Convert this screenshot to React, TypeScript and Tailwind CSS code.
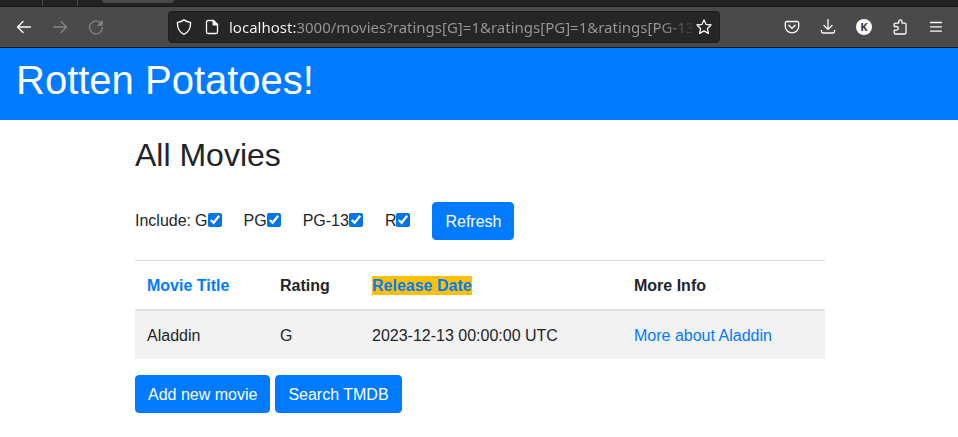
import type { ReactNode } from "react";

const ratings = ["G", "PG", "PG-13", "R"];

const movies = [{ title: "Aladdin", rating: "G", released: "2023-12-13 00:00:00 UTC" }];

function ToolIcon({ children, className = "" }: { children: ReactNode; className?: string }) {
  return (
    <svg
      viewBox="0 0 16 16"
      className={`size-4 ${className}`}
      fill="none"
      stroke="currentColor"
      strokeWidth="1.3"
      strokeLinecap="round"
      strokeLinejoin="round"
      aria-hidden="true"
    >
      {children}
    </svg>
  );
}

function Browser() {
  return (
    <div className="bg-[#4a4a4a] font-['Noto_Sans',sans-serif] text-[#fbfbfe]">
      <div className="flex h-[7px] items-start border-b border-[#181818] bg-[#222222]">
        <div className="h-full w-[43px] border-r border-[#4c4c4c]" />
        <div className="h-full w-[35px] border-r border-[#4c4c4c]" />
        <div className="ml-6 h-[3px] w-[72px] rounded-b-sm bg-[#4a4a4a]" />
      </div>
      <div className="flex h-[41px] items-center border-b border-[#181818] pr-[14px] pl-4">
        <div className="flex w-[152px] shrink-0 items-center gap-5">
          <button type="button" aria-label="Back">
            <ToolIcon>
              <path d="M14.5 8H1.5M7 2.5 1.5 8 7 13.5" />
            </ToolIcon>
          </button>
          <button type="button" aria-label="Forward" className="text-[#858585]">
            <ToolIcon>
              <path d="M1.5 8h13M9 2.5 14.5 8 9 13.5" />
            </ToolIcon>
          </button>
          <button type="button" aria-label="Reload" className="text-[#858585]">
            <ToolIcon>
              <path d="M14.3 8.5A6.4 6.4 0 1 1 12.2 3.6" />
              <path d="M14.4 1.6v4.9H9.5z" fill="currentColor" strokeWidth="0.6" />
            </ToolIcon>
          </button>
        </div>
        <div className="flex h-8 min-w-0 flex-1 items-center rounded-sm border border-[#1c1c1c] bg-[#262626] pr-[7px] pl-[7px]">
          <ToolIcon className="shrink-0">
            <path d="M8 .9C6.200 2.200 4 3 1.500 3.300 1.200 8.500 3.200 13 8 15.300c4.800-2.300 6.800-6.800 6.500-12C12 3 9.800 2.200 8 .9z" />
          </ToolIcon>
          <ToolIcon className="ml-3 shrink-0">
            <path d="M9.500 1.500H4A1.500 1.500 0 0 0 2.500 3v10A1.500 1.500 0 0 0 4 14.500h8a1.500 1.500 0 0 0 1.500-1.500V5.500z" />
            <path d="M9.200 1.500v4.300h4.300z" fill="currentColor" />
          </ToolIcon>
          <input
            type="text"
            aria-label="Address"
            defaultValue="localhost:3000/movies?ratings[G]=1&ratings[PG]=1&ratings[PG-13]=1&ratings[R]=1"
            className="ml-[9px] min-w-0 flex-1 bg-[linear-gradient(to_right,#fbfbfe_68px,#989898_68px,#989898_430px,transparent_470px)] bg-clip-text text-[15px] leading-6 text-transparent outline-none"
          />
          <button type="button" aria-label="Bookmark" className="ml-1 shrink-0">
            <ToolIcon>
              <path d="m8 .9 2.100 4.500 5 .6-3.700 3.400 1 5L8 11.900l-4.400 2.500 1-5L.9 6l5-.6z" />
            </ToolIcon>
          </button>
        </div>
        <div className="ml-16 flex shrink-0 items-center gap-5">
          <button type="button" aria-label="Save to Pocket">
            <ToolIcon>
              <path d="M2.800 2.500h10.400a1.500 1.500 0 0 1 1.500 1.500v3.500a6.700 6.300 0 0 1-13.400 0V4a1.500 1.500 0 0 1 1.500-1.500z" />
              <path d="M4.800 6.300 8 9.300l3.200-3" />
            </ToolIcon>
          </button>
          <button type="button" aria-label="Downloads">
            <ToolIcon>
              <path d="M8 .5v9.700M4 6.500l4 3.900 4-3.900M1.500 11.500v1A1.500 1.500 0 0 0 3 14h10a1.500 1.500 0 0 0 1.500-1.500v-1" />
            </ToolIcon>
          </button>
          <button
            type="button"
            aria-label="Account"
            className="flex size-4 items-center justify-center rounded-full bg-[#fbfbfe] text-[11px] leading-4 font-bold text-[#3a3a3a]"
          >
            K
          </button>
          <button type="button" aria-label="Extensions">
            <ToolIcon>
              <path d="M2.200 7.500V5.300A1.200 1.200 0 0 1 3.400 4.100H6.800V2.400a1.600 1.600 0 0 1 3.200 0v1.700h2.800A1.200 1.200 0 0 1 14 5.300v8.500A1.200 1.200 0 0 1 12.800 15H3.400a1.200 1.200 0 0 1-1.200-1.200V11.200h2.200a1.800 1.800 0 0 0 0-3.700z" />
            </ToolIcon>
          </button>
          <button type="button" aria-label="Menu">
            <ToolIcon>
              <path d="M2.500 3.500h11M2.500 7.800h11M2.500 12.100h11" />
            </ToolIcon>
          </button>
        </div>
      </div>
    </div>
  );
}

function PrimaryButton({ children }: { children: ReactNode }) {
  return (
    <button
      type="button"
      className="rounded-sm border border-[#007bff] bg-[#007bff] px-3 pt-[7px] pb-[5px] text-white"
    >
      {children}
    </button>
  );
}

export default function App() {
  return (
    <div className="min-h-screen bg-white font-['Liberation_Sans',Arial,sans-serif] text-base text-[#212529]">
      <Browser />
      <header className="bg-[#007bff] px-4 pt-2 pb-4 text-white">
        <h1 className="text-[40px] leading-[48px]">Rotten Potatoes!</h1>
      </header>
      <main className="pl-0.5">
        <div className="mx-auto max-w-[690px] pt-4">
          <h2 className="text-[32px] leading-[38px]">All Movies</h2>
          <form className="mt-7 flex items-center">
            <span className="mr-1">Include:</span>
            {ratings.map((rating) => (
              <label key={rating} className="mr-[22px] flex items-center">
                {rating}
                <input type="checkbox" defaultChecked className="mb-0.5 size-3.5 accent-[#0074e8]" />
              </label>
            ))}
            <PrimaryButton>Refresh</PrimaryButton>
          </form>
          <table className="mt-5 mb-4 w-full table-fixed border-collapse text-left">
            <thead>
              <tr className="border-t border-b-2 border-[#dee2e6]">
                <th className="w-[133px] px-3 pt-[13px] pb-[11px]">
                  <a href="#title" className="text-[#007bff]">Movie Title</a>
                </th>
                <th className="w-[92px] px-3 pt-[13px] pb-[11px]">Rating</th>
                <th className="w-[262px] px-3 pt-[13px] pb-[11px]">
                  <a href="#release-date" className="bg-[#ffc107] py-px text-[#007bff]">Release Date</a>
                </th>
                <th className="px-3 pt-[13px] pb-[11px]">More Info</th>
              </tr>
            </thead>
            <tbody>
              {movies.map((movie) => (
                <tr key={movie.title} className="bg-[#f2f2f2]">
                  <td className="px-3 pt-[13px] pb-[11px]">{movie.title}</td>
                  <td className="px-3 pt-[13px] pb-[11px]">{movie.rating}</td>
                  <td className="px-3 pt-[13px] pb-[11px]">{movie.released}</td>
                  <td className="px-3 pt-[13px] pb-[11px]">
                    <a href="#aladdin" className="text-[#007bff]">More about {movie.title}</a>
                  </td>
                </tr>
              ))}
            </tbody>
          </table>
          <div className="flex gap-[5px]">
            <PrimaryButton>Add new movie</PrimaryButton>
            <PrimaryButton>Search TMDB</PrimaryButton>
          </div>
        </div>
      </main>
    </div>
  );
}
